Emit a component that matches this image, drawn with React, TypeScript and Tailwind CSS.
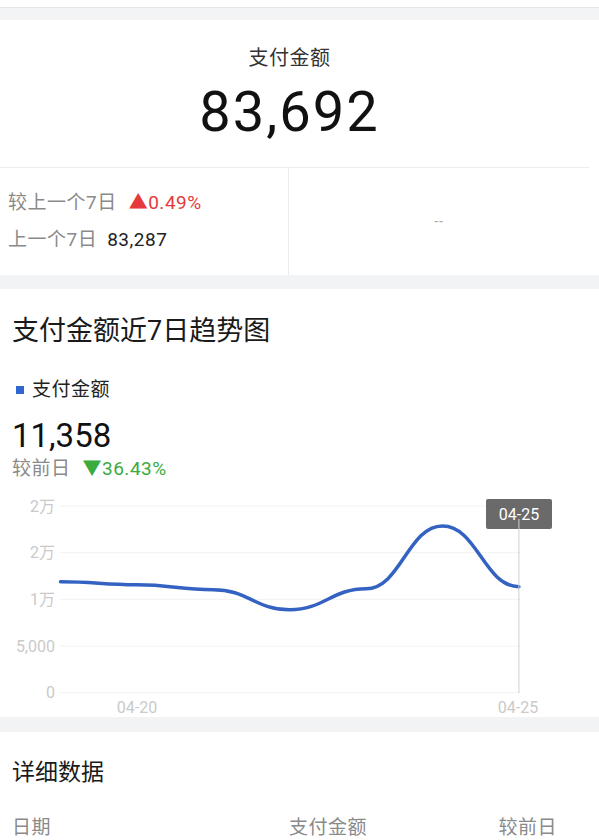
import React from "react";

type Pt = [number, number];

function smoothPath(pts: Pt[], k: number): string {
  let d = `M${pts[0][0]},${pts[0][1]}`;
  for (let i = 0; i < pts.length - 1; i++) {
    const h = (pts[i + 1][0] - pts[i][0]) * k;
    d += ` C${pts[i][0] + h},${pts[i][1]} ${pts[i + 1][0] - h},${pts[i + 1][1]} ${pts[i + 1][0]},${pts[i + 1][1]}`;
  }
  return d;
}

const values = [11890, 11570, 11040, 8890, 11140, 17867, 11358];
const x0 = 60.5;
const stepX = 76.4;
const yZero = 200.7;
const yTop = 14;

function Chart() {
  const pts: Pt[] = values.map((v, i) => [
    x0 + i * stepX,
    yZero - (v / 20000) * (yZero - yTop),
  ]);
  const grid = [
    { y: 14, label: "2万" },
    { y: 60.7, label: "2万" },
    { y: 107.3, label: "1万" },
    { y: 154, label: "5,000" },
    { y: 200.7, label: "0" },
  ];
  const lastX = x0 + 6 * stepX;
  return (
    <svg width="599" height="225" viewBox="0 0 599 225" className="block">
      {grid.map((g, i) => (
        <g key={i}>
          <line x1="60" x2="520" y1={g.y} y2={g.y} stroke="#f2f2f2" strokeWidth="1" />
          <text
            x="55"
            y={g.y}
            textAnchor="end"
            dominantBaseline="central"
            fill="#cacaca"
            fontSize="16"
            fontFamily="Roboto, 'Noto Sans CJK SC', sans-serif"
          >
            {g.label}
          </text>
        </g>
      ))}
      <path d={smoothPath(pts, 0.45)} fill="none" stroke="#3462c2" strokeWidth="3.5" strokeLinecap="round" />
      <rect x="486" y="7" width="66" height="30" rx="2" fill="#6a6a6a" />
      <text
        x="519"
        y="22.5"
        textAnchor="middle"
        dominantBaseline="central"
        fill="#ffffff"
        fontSize="16"
        fontFamily="Roboto, sans-serif"
      >
        04-25
      </text>
      <line x1={lastX} x2={lastX} y1="27" y2="201" stroke="#cfcfcf" strokeWidth="1" />
      <text
        x="137"
        y="215"
        textAnchor="middle"
        dominantBaseline="central"
        fill="#cacaca"
        fontSize="16"
        fontFamily="Roboto, sans-serif"
      >
        04-20
      </text>
      <text
        x="518"
        y="215"
        textAnchor="middle"
        dominantBaseline="central"
        fill="#cacaca"
        fontSize="16"
        fontFamily="Roboto, sans-serif"
      >
        04-25
      </text>
    </svg>
  );
}

export default function App() {
  return (
    <div className="w-[599px] h-[840px] overflow-hidden bg-white font-['Roboto','Noto_Sans_CJK_SC',sans-serif] text-[#222]">
      {/* top strip */}
      <div className="h-[7px] bg-white" />
      <div className="h-[13px] bg-[#f2f4f6] border-t border-[#e4e6e8]" />

      {/* summary card */}
      <div className="bg-white">
        <div className="mr-[20px] flex flex-col items-center pt-[26px] pb-[25px]">
          <div className="text-[20px] leading-[24px] text-[#333] tracking-[0.5px]">支付金额</div>
          <div className="mt-[12px] text-[56px] leading-[60px] text-[#111] tracking-[2px]">83,692</div>
        </div>
        <div className="mr-[10px] border-t border-[#ececec] flex h-[108px]">
          <div className="w-[289px] border-r border-[#ececec] pl-[8px] pt-[23px]">
            <div className="flex items-center text-[19px] leading-[24px] tracking-[0.5px]">
              <span className="text-[#8a8a8a]">较上一个7日</span>
              <span className="ml-[12px] text-[#e5393b] text-[19px]">▲0.49%</span>
            </div>
            <div className="mt-[13px] flex items-center text-[19px] leading-[24px] tracking-[0.5px]">
              <span className="text-[#8a8a8a]">上一个7日</span>
              <span className="ml-[10px] text-[#222] text-[19px]">83,287</span>
            </div>
          </div>
          <div className="flex-1 flex items-center justify-center text-[14px] tracking-[1px] text-[#a8a8a8]">--</div>
        </div>
      </div>

      <div className="h-[14px] bg-[#f2f3f5]" />

      {/* trend section */}
      <div className="bg-white h-[428px] flex flex-col">
        <div className="pl-[12px] pt-[26px] text-[27px] leading-[32px] text-[#1a1a1a]">
          支付金额近7日趋势图
        </div>
        <div className="pl-[16px] mt-[30px] flex items-center text-[19px] leading-[26px] tracking-[0.5px] text-[#222]">
          <span className="w-[8px] h-[8px] bg-[#2f66d0] mr-[8px]" />
          支付金额
        </div>
        <div className="pl-[12px] mt-[15px] text-[33px] leading-[36px] text-[#111]">11,358</div>
        <div className="pl-[12px] mt-[4px] flex items-center text-[19px] leading-[22px] tracking-[0.5px]">
          <span className="text-[#8a8a8a]">较前日</span>
          <span className="ml-[12px] text-[#3aab3e] text-[19px]">▼36.43%</span>
        </div>
        <div className="mt-[12px]">
          <Chart />
        </div>
      </div>

      <div className="h-[15px] bg-[#f2f3f5]" />

      {/* details */}
      <div className="bg-white">
        <div className="pl-[12px] pt-[25px] text-[23px] leading-[32px] text-[#1a1a1a]">详细数据</div>
        <div className="mt-[27px] flex items-center text-[19px] leading-[24px] tracking-[0.5px] text-[#8a8a8a]">
          <div className="pl-[12px] w-[289px]">日期</div>
          <div className="flex-1">支付金额</div>
          <div className="pr-[42px]">较前日</div>
        </div>
      </div>
    </div>
  );
}
